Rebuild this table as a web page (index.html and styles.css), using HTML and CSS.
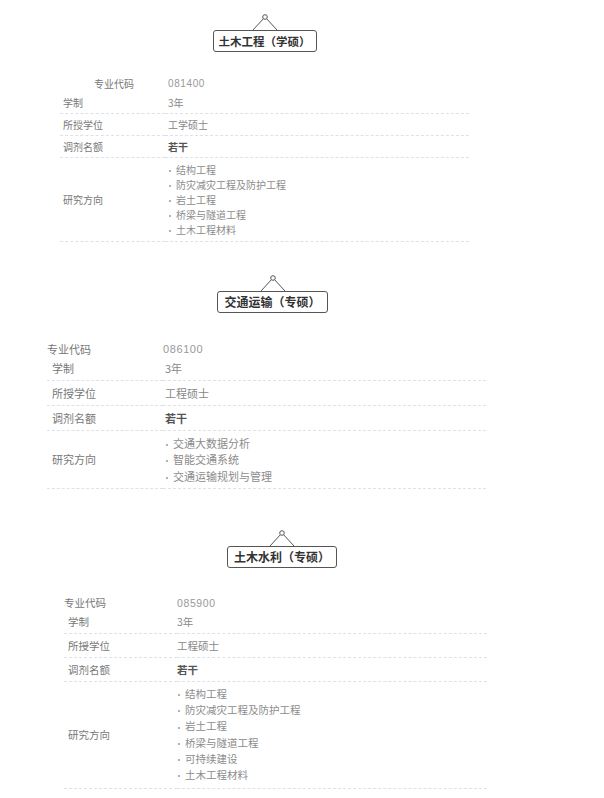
FILE: index.html
```html
<!DOCTYPE html>
<html lang="zh-CN">
  <head>
    <meta charset="UTF-8" />
    <meta name="viewport" content="width=device-width, initial-scale=1.0" />
    <title>调剂专业信息</title>
    <link rel="stylesheet" href="styles.css">
  </head>
  <body>
    <!-- 土木工程（学硕） -->
    <section class="major major-civil">
      <div class="sign">
        <svg class="hook" width="28" height="16" viewBox="0 0 28 16">
          <line x1="12.3" y1="4.8" x2="2" y2="16" />
          <line x1="15.7" y1="4.8" x2="26" y2="16" />
          <circle cx="14" cy="3" r="2.3" />
        </svg>
        <div class="sign-box">土木工程（学硕）</div>
      </div>
      <table class="info">
        <tr class="code-row"><th>专业代码</th><td class="num">081400</td></tr>
        <tr><th>学制</th><td>3年</td></tr>
        <tr><th>所授学位</th><td>工学硕士</td></tr>
        <tr><th>调剂名额</th><td class="strong">若干</td></tr>
        <tr>
          <th>研究方向</th>
          <td>
            <ul class="dirs">
              <li>结构工程</li>
              <li>防灾减灾工程及防护工程</li>
              <li>岩土工程</li>
              <li>桥梁与隧道工程</li>
              <li>土木工程材料</li>
            </ul>
          </td>
        </tr>
      </table>
    </section>

    <!-- 交通运输（专硕） -->
    <section class="major major-traffic">
      <div class="sign">
        <svg class="hook" width="28" height="16" viewBox="0 0 28 16">
          <line x1="12.3" y1="4.8" x2="2" y2="16" />
          <line x1="15.7" y1="4.8" x2="26" y2="16" />
          <circle cx="14" cy="3" r="2.3" />
        </svg>
        <div class="sign-box">交通运输（专硕）</div>
      </div>
      <table class="info">
        <tr class="code-row"><th>专业代码</th><td class="num">086100</td></tr>
        <tr><th>学制</th><td>3年</td></tr>
        <tr><th>所授学位</th><td>工程硕士</td></tr>
        <tr><th>调剂名额</th><td class="strong">若干</td></tr>
        <tr>
          <th>研究方向</th>
          <td>
            <ul class="dirs">
              <li>交通大数据分析</li>
              <li>智能交通系统</li>
              <li>交通运输规划与管理</li>
            </ul>
          </td>
        </tr>
      </table>
    </section>

    <!-- 土木水利（专硕） -->
    <section class="major major-water">
      <div class="sign">
        <svg class="hook" width="28" height="16" viewBox="0 0 28 16">
          <line x1="12.3" y1="4.8" x2="2" y2="16" />
          <line x1="15.7" y1="4.8" x2="26" y2="16" />
          <circle cx="14" cy="3" r="2.3" />
        </svg>
        <div class="sign-box">土木水利（专硕）</div>
      </div>
      <table class="info">
        <tr class="code-row"><th>专业代码</th><td class="num">085900</td></tr>
        <tr><th>学制</th><td>3年</td></tr>
        <tr><th>所授学位</th><td>工程硕士</td></tr>
        <tr><th>调剂名额</th><td class="strong">若干</td></tr>
        <tr>
          <th>研究方向</th>
          <td>
            <ul class="dirs">
              <li>结构工程</li>
              <li>防灾减灾工程及防护工程</li>
              <li>岩土工程</li>
              <li>桥梁与隧道工程</li>
              <li>可持续建设</li>
              <li>土木工程材料</li>
            </ul>
          </td>
        </tr>
      </table>
    </section>
  </body>
</html>
```

FILE: styles.css
```css
body {
  margin: 0;
  padding: 14px 0 20px 0;
  background-color: #fff;
  color: #777;
  font-family: "Noto Sans CJK SC", sans-serif;
}

.major {
  box-sizing: border-box;
}

/* hanging title sign */
.sign {
  display: flex;
  flex-direction: column;
  align-items: center;
}

.hook {
  display: block;
}

.hook line {
  stroke: #555;
  stroke-width: 1;
}

.hook circle {
  fill: #fff;
  stroke: #555;
  stroke-width: 1;
}

.sign-box {
  border: 1px solid #555;
  border-radius: 3px;
  padding: 0 6px;
  line-height: 20px;
  font-size: 12px;
  font-weight: bold;
  color: #333;
  white-space: nowrap;
}

/* info table */
.info {
  width: 100%;
  border-collapse: collapse;
}

.info th,
.info td {
  text-align: left;
  vertical-align: middle;
  font-weight: normal;
  border-bottom: 1px dashed #dce2ec;
}

.info th {
  color: #777;
}

.info td {
  color: #888;
}

.info .code-row th,
.info .code-row td {
  border-bottom: none;
  padding-top: 0;
  padding-bottom: 0;
}

.info td.num {
  font-family: "Liberation Sans", sans-serif;
  letter-spacing: 0.6px;
  color: #999;
}

.info td.strong {
  font-weight: bold;
  color: #555;
}

.dirs {
  list-style: none;
  margin: 0;
  padding: 0;
  color: #8c8c8c;
}

.dirs li::before {
  content: "";
  display: inline-block;
  width: 2px;
  height: 2px;
  margin: 0 5px 0 1px;
  border-radius: 50%;
  background-color: #999;
  vertical-align: middle;
}

/* 土木工程 */
.major-civil {
  width: 409px;
  margin-left: 60px;
}

.major-civil .sign-box {
  font-size: 11.5px;
  padding: 0 5px;
}

.major-civil .info {
  margin-top: 23px;
  font-size: 10px;
}

.major-civil th {
  width: 102px;
  padding: 4px 0 4px 3px;
  line-height: 13px;
}

.major-civil td {
  padding: 4px 0 4px 3px;
  line-height: 13px;
}

.major-civil .code-row th {
  text-align: center;
  line-height: 17px;
}

.major-civil .code-row td {
  line-height: 17px;
}

.major-civil .dirs li {
  line-height: 15px;
}

/* 交通运输 */
.major-traffic {
  width: 439px;
  margin-left: 47px;
  margin-top: 33px;
}

.major-traffic .sign {
  padding-left: 12px;
}

.major-traffic .info {
  margin-top: 29px;
  font-size: 11px;
}

.major-traffic th {
  width: 111px;
  padding: 4px 0 4px 5px;
  line-height: 16px;
}

.major-traffic td {
  padding: 4px 0 4px 2px;
  line-height: 16px;
}

.major-traffic .code-row th,
.major-traffic .code-row td {
  padding-left: 0;
  line-height: 14px;
}

.major-traffic .dirs li {
  line-height: 16.5px;
}

.major-traffic tr:last-child td,
.major-traffic tr:last-child th {
  padding-top: 3.5px;
  padding-bottom: 3.5px;
}

/* 土木水利 */
.major-water {
  width: 423px;
  margin-left: 64px;
  margin-top: 41px;
}

.major-water .sign {
  padding-left: 13px;
}

.major-water .info {
  margin-top: 28px;
  font-size: 10.5px;
}

.major-water th {
  width: 109px;
  padding: 4px 0 4px 4px;
  line-height: 15px;
}

.major-water td {
  padding: 4px 0 4px 0;
  line-height: 15px;
}

.major-water .code-row th {
  padding-left: 0;
  line-height: 14px;
}

.major-water .code-row td {
  line-height: 14px;
}

.major-water .dirs li {
  line-height: 16.2px;
}

.major-water tr:last-child td,
.major-water tr:last-child th {
  padding-top: 4.5px;
  padding-bottom: 4.5px;
}
```
